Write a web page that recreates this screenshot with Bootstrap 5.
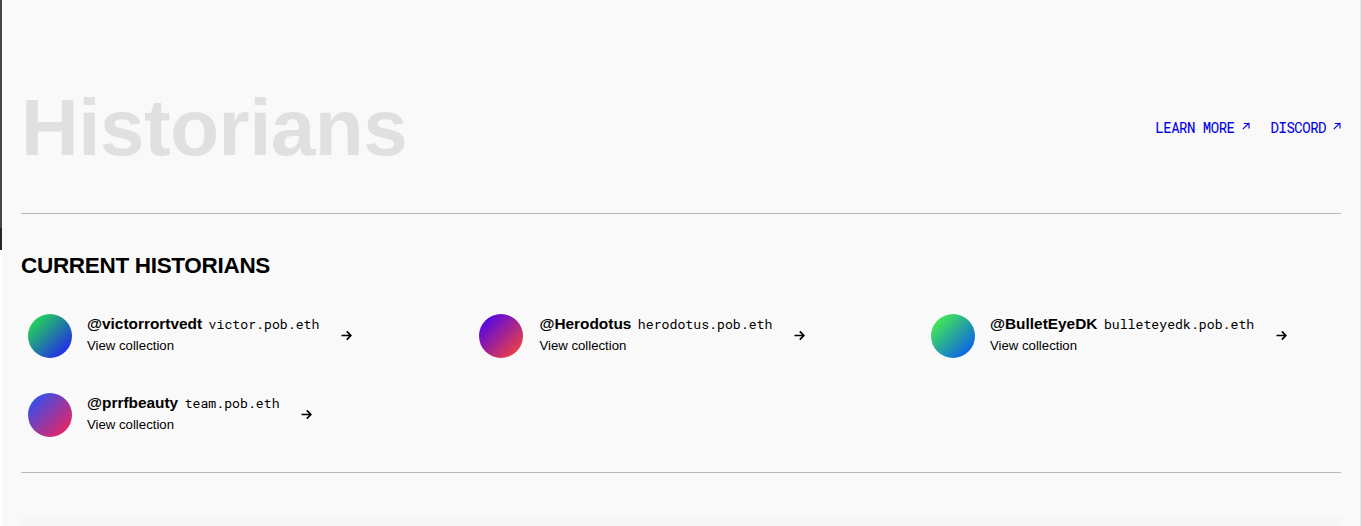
<!DOCTYPE html>
<html lang="en">
<head>
<meta charset="utf-8">
<title>Historians</title>
<link href="https://cdn.jsdelivr.net/npm/bootstrap@5.3.0/dist/css/bootstrap.min.css" rel="stylesheet">
<style>
html{overflow:hidden}
body{background:#f9f9f9;color:#000;font-family:"Liberation Sans",Arial,sans-serif;height:526px;overflow:hidden;border-right:1px solid #e8e8e8}
.edge{width:2px;height:526px;background:linear-gradient(#42464b 0 228px,#252629 228px 250px,#fff 250px)}
main{padding:0 19px;height:526px}
.masthead{height:214px;padding-top:78px;border-bottom:1px solid #b8b8b8}
.masthead h1{font-size:80px;line-height:100px;color:#e0e0e0;letter-spacing:-.5px;margin:0}
.mono{font-family:"Roboto Mono","Liberation Mono",monospace;font-size:13.2px}
.toplinks{height:100px;gap:21px;padding-bottom:2px;font-size:14px;letter-spacing:-.48px;-webkit-text-stroke:.1px #0000e6}
.toplinks a{color:#0000e6}
.toplinks svg{width:8px;height:8px;margin-left:7px;margin-bottom:2px}
.current{height:259px;border-bottom:1px solid #b8b8b8;padding-top:37px}
.current h2{font-size:22.5px;line-height:30px;font-weight:700;letter-spacing:-.31px;margin:0 0 22px}
.people{display:grid;grid-template-columns:repeat(3,417px);column-gap:34.5px;grid-auto-rows:79px}
.person{height:65px;padding-left:7px;color:#000}
.person:nth-child(2){padding-left:6.5px}
.person:nth-child(2) .names{padding-left:1.4px}
.avatar{width:44px;height:44px;margin-right:15px}
.handle{font-size:15.4px;font-weight:700;line-height:22px;margin-right:6.5px}
.view{font-size:13.2px;line-height:22px}
.names{margin-top:-1px}
.person svg{width:11px;height:11px;margin-left:21.5px}
.a1{background:linear-gradient(135deg,#22e050 8%,#2230e4 85%)}
.a2{background:linear-gradient(135deg,#5808e0 15%,#ec4044 88%)}
.a3{background:linear-gradient(135deg,#44ec50 12%,#0c66e4 85%)}
.a4{background:linear-gradient(135deg,#3450ec 12%,#e0266a 85%)}
.panel{height:9px;margin-top:44px;background:#f6f6f6}
</style>
</head>
<body>
<svg class="d-none">
<symbol id="go" viewBox="0 0 11 11"><path d="M.5 5.5H9.7M5.8 1.4 9.8 5.5 5.8 9.6" fill="none" stroke="#000" stroke-width="1.7"/></symbol>
<symbol id="out" viewBox="0 0 8 8"><path d="M.8 7.2 7 1M1.8 1.5H7V6.5" fill="none" stroke="#0000e6" stroke-width="1.1"/></symbol>
</svg>
<div class="d-flex">
<div class="edge flex-shrink-0"></div>
<main class="flex-grow-1">
<header class="masthead d-flex justify-content-between align-items-start">
<h1 class="fw-bold">Historians</h1>
<nav class="mono toplinks d-flex align-items-center">
<a href="#" class="text-decoration-none d-flex align-items-center">LEARN MORE<svg><use href="#out"/></svg></a>
<a href="#" class="text-decoration-none d-flex align-items-center">DISCORD<svg><use href="#out"/></svg></a>
</nav>
</header>
<section class="current">
<h2>CURRENT HISTORIANS</h2>
<div class="people">
<a href="#" class="person d-flex align-items-center text-decoration-none"><span class="avatar rounded-circle a1"></span><div class="names"><div class="d-flex align-items-baseline"><span class="handle">@victorrortvedt</span><span class="mono">victor.pob.eth</span></div><div class="view">View collection</div></div><svg><use href="#go"/></svg></a>
<a href="#" class="person d-flex align-items-center text-decoration-none"><span class="avatar rounded-circle a2"></span><div class="names"><div class="d-flex align-items-baseline"><span class="handle">@Herodotus</span><span class="mono">herodotus.pob.eth</span></div><div class="view">View collection</div></div><svg><use href="#go"/></svg></a>
<a href="#" class="person d-flex align-items-center text-decoration-none"><span class="avatar rounded-circle a3"></span><div class="names"><div class="d-flex align-items-baseline"><span class="handle">@BulletEyeDK</span><span class="mono">bulleteyedk.pob.eth</span></div><div class="view">View collection</div></div><svg><use href="#go"/></svg></a>
<a href="#" class="person d-flex align-items-center text-decoration-none"><span class="avatar rounded-circle a4"></span><div class="names"><div class="d-flex align-items-baseline"><span class="handle">@prrfbeauty</span><span class="mono">team.pob.eth</span></div><div class="view">View collection</div></div><svg><use href="#go"/></svg></a>
</div>
</section>
<div class="panel"></div>
</main>
</div>
<script src="https://cdn.jsdelivr.net/npm/bootstrap@5.3.0/dist/js/bootstrap.bundle.min.js"></script>
</body>
</html>
